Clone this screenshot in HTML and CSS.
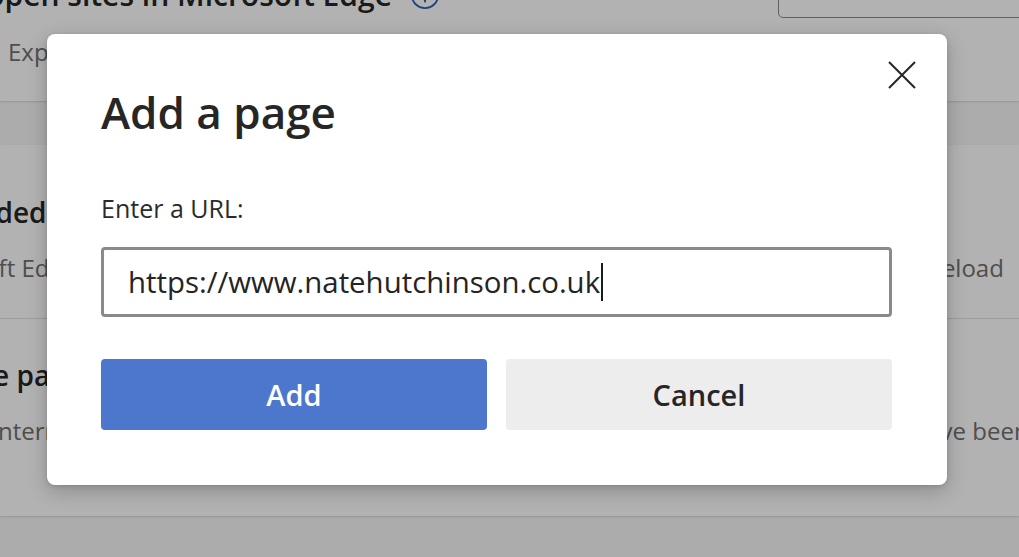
FILE: index.html
```html
<!DOCTYPE html>
<html lang="en">
<head>
<meta charset="utf-8">
<title>Settings – Default browser</title>
<link rel="stylesheet" href="styles.css">
</head>
<body>
  <main class="page">
    <section class="card card-top">
      <div class="row-head">
        <h2 class="row-title title-top">Let Internet Explorer open sites in Microsoft Edge
          <svg class="info" viewBox="0 0 32 32" aria-hidden="true"><circle cx="16" cy="16" r="14" fill="none" stroke="currentColor" stroke-width="2"/><path d="M16 14v9" stroke="currentColor" stroke-width="2.2" stroke-linecap="round"/><circle cx="16" cy="10" r="1.5" fill="currentColor"/></svg>
        </h2>
        <div class="select">Incompatible sites only</div>
      </div>
      <p class="row-desc desc-top">Explorer will open sites that need Microsoft Edge automatically in Microsoft Edge</p>
    </section>

    <section class="card card-main">
      <div class="row">
        <h3 class="row-title title-a">Allow sites to be reloaded in Internet Explorer mode</h3>
        <p class="row-desc desc-a">When browsing in Microsoft Edge, if a site requires Internet Explorer for compatibility, you can then choose to reload</p>
      </div>
      <div class="row">
        <h3 class="row-title title-b">Internet Explorer mode pages</h3>
        <p class="row-desc desc-b">These pages will open in Internet Explorer mode for 30 days from the date you add the page. All pages that have been added will be listed here.</p>
      </div>
    </section>
  </main>

  <div class="scrim"></div>

  <div class="dialog" role="dialog" aria-labelledby="dlg-title">
    <button class="close" aria-label="Close">
      <svg viewBox="0 0 28 28" aria-hidden="true"><path d="M1 1L27 27M27 1L1 27" stroke="currentColor" stroke-width="2" fill="none"/></svg>
    </button>
    <h1 id="dlg-title" class="dialog-title">Add a page</h1>
    <label class="field-label" for="url">Enter a URL:</label>
    <div class="field"><span class="field-text">https://www.natehutchinson.co.uk</span><span class="caret"></span></div>
    <div class="actions">
      <button class="btn btn-primary">Add</button>
      <button class="btn btn-secondary">Cancel</button>
    </div>
  </div>
</body>
</html>
```

FILE: styles.css
```css
* { box-sizing: border-box; }

html, body {
  margin: 0;
  height: 100%;
  overflow: hidden;
}

body {
  background: #f7f7f7;
  font-family: "Open Sans", "Noto Sans", sans-serif;
  color: #1b1b1b;
  position: relative;
}

/* settings page underneath */
.page {
  margin-top: -40px;
}

.card {
  background: #ffffff;
  box-shadow: 0 1px 2px rgba(0, 0, 0, 0.14);
}

.card-top {
  height: 141px;
  padding-top: 15px;
}

.row-head {
  display: flex;
  align-items: flex-start;
  justify-content: space-between;
}

.row-title {
  margin: 0;
  font-weight: 600;
  white-space: nowrap;
  color: #262626;
}

.title-top {
  font-size: 30px;
  line-height: 40px;
  margin-left: -323px;
  display: flex;
  align-items: center;
  gap: 18px;
}

.info {
  width: 30px;
  height: 30px;
  color: #2f5fb8;
  flex: none;
}

.select {
  width: 260px;
  height: 46px;
  margin-top: -3px;
  margin-right: -19px;
  border: 1px solid #8a8a8a;
  border-radius: 5px;
  font-size: 21px;
  line-height: 28px;
  padding-left: 14px;
  color: #1b1b1b;
  white-space: nowrap;
  overflow: hidden;
  flex: none;
}

.row-desc {
  margin: 0;
  font-size: 24px;
  line-height: 30px;
  color: #707070;
  white-space: nowrap;
}

.desc-top {
  margin-top: 19px;
  margin-left: 8px;
}

.card-main {
  margin-top: 44px;
  padding-bottom: 70px;
  overflow: hidden;
}

.row {
  padding: 0 0 35px 0;
}

.row + .row {
  border-top: 1px solid #e0e0e0;
  padding-top: 39px;
  padding-bottom: 0;
}

.row:first-child {
  padding-top: 50px;
}

.row .row-title {
  font-size: 28px;
  line-height: 34px;
}

.row .row-desc {
  margin-top: 24px;
}

.title-a { margin-left: -301px; }
.desc-a  { margin-left: -298px; }
.title-b { margin-left: -307px; }
.desc-b  { margin-left: -287px; }

/* dimming layer */
.scrim {
  position: absolute;
  inset: 0;
  background: rgba(0, 0, 0, 0.3);
}

/* modal */
.dialog {
  position: absolute;
  left: 47px;
  top: 34px;
  width: 900px;
  height: 451px;
  background: #ffffff;
  border-radius: 8px;
  box-shadow: 0 6px 20px rgba(0, 0, 0, 0.22), 0 1px 4px rgba(0, 0, 0, 0.12);
  padding: 52px 55px 55px 54px;
  display: flex;
  flex-direction: column;
}

.close {
  position: absolute;
  right: 31px;
  top: 27px;
  width: 28px;
  height: 28px;
  padding: 0;
  border: 0;
  background: none;
  color: #262626;
}

.close svg {
  display: block;
  width: 28px;
  height: 28px;
}

.dialog-title {
  margin: 0;
  font-size: 44px;
  line-height: 52px;
  font-weight: 600;
  color: #262626;
}

.field-label {
  margin-top: 55px;
  font-size: 25px;
  line-height: 30px;
  color: #2b2b2b;
}

.field {
  margin-top: 24px;
  height: 70px;
  border: 3px solid #8a8a8a;
  border-radius: 4px;
  display: flex;
  align-items: center;
  padding-left: 24px;
  font-size: 29.4px;
  color: #242424;
}

.caret {
  width: 2px;
  height: 38px;
  background: #1b1b1b;
  margin-left: 1px;
}

.actions {
  margin-top: 42px;
  display: flex;
  gap: 19px;
}

.btn {
  flex: 1;
  height: 71px;
  border: 0;
  border-radius: 4px;
  font-family: inherit;
  font-size: 29px;
  font-weight: 600;
}

.btn-primary {
  background: #4c77cc;
  color: #ffffff;
}

.btn-secondary {
  background: #ededed;
  color: #262626;
}
```
